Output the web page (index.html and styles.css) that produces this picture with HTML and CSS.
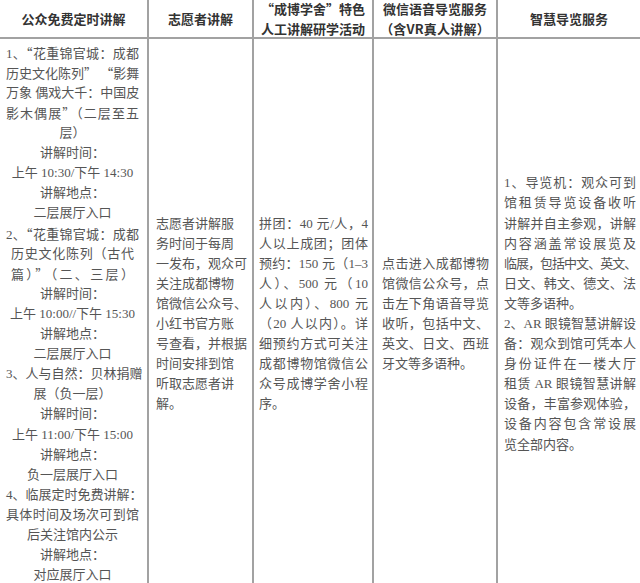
FILE: index.html
```html
<!DOCTYPE html>
<html lang="zh-CN">
<head>
<meta charset="utf-8">
<title>讲解服务</title>
<link rel="stylesheet" href="styles.css">
</head>
<body>
<div class="sheet">
  <div class="row head">
    <div class="cell c1"><div>公众免费定时讲解</div></div>
    <div class="cell c2"><div>志愿者讲解</div></div>
    <div class="cell c3"><div><span class="q">“</span>成博学舍<span class="q">”</span>特色</div><div>人工讲解研学活动</div></div>
    <div class="cell c4"><div>微信语音导览服务</div><div class="hj">（含VR真人讲解）</div></div>
    <div class="cell c5"><div>智慧导览服务</div></div>
  </div>
  <div class="row body">
    <div class="cell c1">
      <div class="ln full">1、<span class="q">“</span>花重锦官城：成都</div>
      <div class="ln full">历史文化陈列<span class="q">”</span> <span class="q">“</span>影舞</div>
      <div class="ln full">万象 偶戏大千：中国皮</div>
      <div class="ln full">影木偶展<span class="q">”</span>（二层至五</div>
      <div class="ln">层）</div>
      <div class="ln">讲解时间：</div>
      <div class="ln">上午 10:30/下午 14:30</div>
      <div class="ln">讲解地点：</div>
      <div class="ln">二层展厅入口</div>
      <div class="ln full">2、<span class="q">“</span>花重锦官城：成都</div>
      <div class="ln full inset">历史文化陈列（古代</div>
      <div class="ln full inset">篇）<span class="q">”</span>（二、三层）</div>
      <div class="ln">讲解时间：</div>
      <div class="ln">上午 10:00//下午 15:30</div>
      <div class="ln">讲解地点：</div>
      <div class="ln">二层展厅入口</div>
      <div class="ln full">3、人与自然：贝林捐赠</div>
      <div class="ln">展（负一层）</div>
      <div class="ln">讲解时间：</div>
      <div class="ln">上午 11:00/下午 15:00</div>
      <div class="ln">讲解地点：</div>
      <div class="ln">负一层展厅入口</div>
      <div class="ln full">4、临展定时免费讲解：</div>
      <div class="ln full">具体时间及场次可到馆</div>
      <div class="ln">后关注馆内公示</div>
      <div class="ln">讲解地点：</div>
      <div class="ln">对应展厅入口</div>
    </div>
    <div class="cell c2">
      <div class="ln">志愿者讲解服</div>
      <div class="ln">务时间于每周</div>
      <div class="ln">一发布，观众可</div>
      <div class="ln">关注成都博物</div>
      <div class="ln">馆微信公众号、</div>
      <div class="ln">小红书官方账</div>
      <div class="ln">号查看，并根据</div>
      <div class="ln">时间安排到馆</div>
      <div class="ln">听取志愿者讲</div>
      <div class="ln">解。</div>
    </div>
    <div class="cell c3">
      <div class="ln full">拼团：40 元/人，4</div>
      <div class="ln full">人以上成团；团体</div>
      <div class="ln full">预约：150 元（1–3</div>
      <div class="ln full">人）、500 元（10</div>
      <div class="ln full">人以内）、800 元</div>
      <div class="ln full">（20 人以内）。详</div>
      <div class="ln full">细预约方式可关注</div>
      <div class="ln full">成都博物馆微信公</div>
      <div class="ln full">众号成博学舍小程</div>
      <div class="ln">序。</div>
    </div>
    <div class="cell c4">
      <div class="ln full">点击进入成都博物</div>
      <div class="ln full">馆微信公众号，点</div>
      <div class="ln full">击左下角语音导览</div>
      <div class="ln full">收听，包括中文、</div>
      <div class="ln full">英文、日文、西班</div>
      <div class="ln">牙文等多语种。</div>
    </div>
    <div class="cell c5">
      <div class="ln full">1、导览机：观众可到</div>
      <div class="ln full">馆租赁导览设备收听</div>
      <div class="ln full">讲解并自主参观，讲解</div>
      <div class="ln full">内容涵盖常设展览及</div>
      <div class="ln full tight">临展，包括中文、英文、</div>
      <div class="ln full">日文、韩文、德文、法</div>
      <div class="ln">文等多语种。</div>
      <div class="ln full">2、AR 眼镜智慧讲解设</div>
      <div class="ln full">备：观众到馆可凭本人</div>
      <div class="ln full">身份证件在一楼大厅</div>
      <div class="ln full">租赁 AR 眼镜智慧讲解</div>
      <div class="ln full">设备，丰富参观体验，</div>
      <div class="ln full">设备内容包含常设展</div>
      <div class="ln">览全部内容。</div>
    </div>
  </div>
</div>
</body>
</html>
```

FILE: styles.css
```css
html, body {
  margin: 0;
  padding: 0;
  background: #ffffff;
  height: 583px;
  overflow: hidden;
}

.sheet {
  margin-top: -1px;
  width: 640px;
}

.row {
  display: grid;
  grid-template-columns: 147px 105px 120px 124px 144px;
}

.cell {
  box-sizing: border-box;
  display: flex;
  flex-direction: column;
  justify-content: center;
}

.cell + .cell {
  border-left: 2px solid #a2a2a2;
}

.q {
  font-family: "Noto Sans CJK SC", sans-serif;
  font-feature-settings: "fwid" 1;
}

.head {
  height: 40px;
  border-bottom: 2px solid #a2a2a2;
  box-sizing: border-box;
  font-family: "Noto Sans CJK SC", sans-serif;
  font-weight: bold;
  font-size: 13px;
  line-height: 20px;
  color: #333333;
  text-align: center;
}

.head .hj {
  letter-spacing: 0.2px;
}

.body {
  height: 550px;
  font-family: "Liberation Serif", "Noto Sans CJK SC", serif;
  font-size: 13px;
  color: #555555;
}

.ln {
  height: 20.1px;
  line-height: 20.1px;
  white-space: nowrap;
}

.full {
  text-align: justify;
  text-align-last: justify;
}

.body .c1 {
  padding: 0 8px 0 6px;
  text-align: center;
}

.body .c1 .inset {
  padding: 0 5px;
}

.body .c2 {
  padding: 0 4px 0 7px;
  text-align: left;
}

.body .c3 {
  padding: 0 4px 0 5px;
}

.body .c4 {
  padding: 0 7px 0 8px;
}

.body .c5 {
  padding: 0 4px 0 6px;
}

.tight {
  letter-spacing: -1.2px;
}
```
